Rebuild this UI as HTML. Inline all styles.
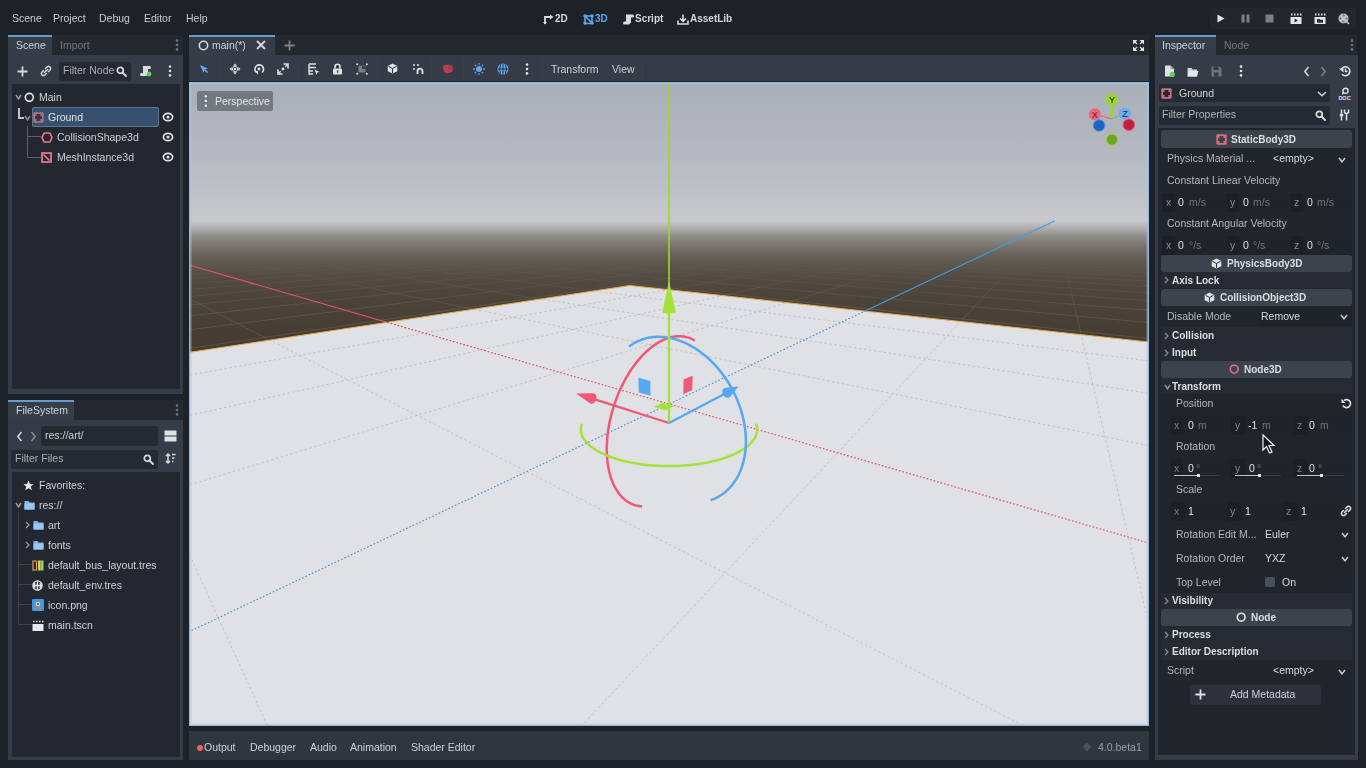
<!DOCTYPE html>
<html><head><meta charset="utf-8">
<style>
*{margin:0;padding:0;box-sizing:border-box}
html,body{width:1366px;height:768px;overflow:hidden;background:#1d2229;font-family:"Liberation Sans",sans-serif;color:#cfd1d4}
.a{position:absolute}
.t{position:absolute;white-space:nowrap;line-height:12px;will-change:transform}
svg{overflow:visible}
</style></head><body>

<div class="t" style="left:12.2px;top:12px;font-size:10.5px;color:#c9cbce;">Scene</div>
<div class="t" style="left:53.2px;top:12px;font-size:10.5px;color:#c9cbce;">Project</div>
<div class="t" style="left:99.1px;top:12px;font-size:10.5px;color:#c9cbce;">Debug</div>
<div class="t" style="left:144.0px;top:12px;font-size:10.5px;color:#c9cbce;">Editor</div>
<div class="t" style="left:186.1px;top:12px;font-size:10.5px;color:#c9cbce;">Help</div>
<svg class="a" style="left:542.5px;top:13.5px" width="11" height="11" viewBox="0 0 11 11"><g fill="none" stroke="#d9dbde" stroke-width="1.8"><path d="M2 10V3h6"/></g><path d="M7 0.5L10.5 3L7 5.5z" fill="#d9dbde"/><path d="M0 8L2 10.5L4 8z" fill="#d9dbde"/></svg>
<svg class="a" style="left:582.8px;top:13.5px" width="11" height="11" viewBox="0 0 11 11"><g fill="none" stroke="#5aa6ee" stroke-width="1.6"><path d="M2 2L9 9M2 3.5V9.5H8M3 2H9V8"/></g><g fill="#5aa6ee"><circle cx="2" cy="2" r="1.8"/><circle cx="9" cy="2" r="1.8"/><circle cx="2" cy="9" r="1.8"/><circle cx="9" cy="9" r="1.8"/></g></svg>
<svg class="a" style="left:622.5px;top:13.5px" width="11" height="11" viewBox="0 0 11 11"><path d="M3 0.5h6.5a1.5 1.5 0 0 1 0 3H8v5L6 10.5H1.5a1.5 1.5 0 0 1 0-3H3z" fill="#d9dbde"/></svg>
<svg class="a" style="left:677.0px;top:13.5px" width="12" height="11" viewBox="0 0 12 11"><g fill="none" stroke="#d9dbde" stroke-width="1.6"><path d="M6 0.5V7M3 4.5L6 7.3L9 4.5M1 6.5V10H11V6.5"/></g></svg>
<div class="t" style="left:555.4px;top:13px;font-size:10px;color:#d4d6d9;font-weight:bold;">2D</div>
<div class="t" style="left:595.3px;top:13px;font-size:10px;color:#5aa6ee;font-weight:bold;">3D</div>
<div class="t" style="left:635.1px;top:13px;font-size:10px;color:#d4d6d9;font-weight:bold;">Script</div>
<div class="t" style="left:690.2px;top:13px;font-size:10px;color:#d4d6d9;font-weight:bold;">AssetLib</div>
<div class="a" style="left:1210px;top:8px;width:146px;height:21px;background:#22272e;border-radius:3px;"></div>
<svg class="a" style="left:1216.5px;top:13.5px" width="8" height="9" viewBox="0 0 8 9"><path d="M0.5 0.5L7.5 4.5L0.5 8.5z" fill="#e4e6e8"/></svg>
<svg class="a" style="left:1240.5px;top:13.5px" width="9" height="9" viewBox="0 0 9 9"><rect x="0.5" y="0.5" width="3" height="8" fill="#7b7f86"/><rect x="5.5" y="0.5" width="3" height="8" fill="#7b7f86"/></svg>
<svg class="a" style="left:1264.5px;top:13.5px" width="9" height="9" viewBox="0 0 9 9"><rect x="0.5" y="0.5" width="8" height="8" rx="1" fill="#7b7f86"/></svg>
<svg class="a" style="left:1290.0px;top:12.5px" width="12" height="11" viewBox="0 0 12 11"><path d="M1 1.5h1.5M4 1.5h1.5M7 1.5h1.5M10 1.5h1.5" stroke="#e4e6e8" stroke-width="1.8"/><rect x="0.5" y="4" width="11" height="7" fill="#e4e6e8"/><path d="M4.5 5.5L8 7.5L4.5 9.5z" fill="#2a2f37"/></svg>
<svg class="a" style="left:1314.0px;top:12.5px" width="12" height="11" viewBox="0 0 12 11"><path d="M1 1.5h1.5M4 1.5h1.5M7 1.5h1.5M10 1.5h1.5" stroke="#e4e6e8" stroke-width="1.8"/><rect x="0.5" y="4" width="11" height="7" fill="#e4e6e8"/><path d="M3 6h2.5l0.7 0.8H9v3H3z" fill="#2a2f37"/></svg>
<svg class="a" style="left:1338.3px;top:12.5px" width="12" height="11" viewBox="0 0 12 11"><circle cx="5.5" cy="5.5" r="5" fill="#c3c6ca"/><g fill="#7b7f86"><circle cx="5.5" cy="2.5" r="1.2"/><circle cx="2.5" cy="5.5" r="1.2"/><circle cx="8.5" cy="5.5" r="1.2"/><circle cx="5.5" cy="8.5" r="1.2"/></g><path d="M8 8L11 11" stroke="#c3c6ca" stroke-width="1.5"/></svg>
<div class="a" style="left:8px;top:35px;width:175px;height:20px;background:#242930;"></div>
<div class="a" style="left:8px;top:35px;width:44px;height:20px;background:#363c48;"></div>
<div class="a" style="left:8px;top:35px;width:44px;height:2px;background:#6b9ad0;"></div>
<div class="a" style="left:8px;top:55px;width:175px;height:339px;background:#353b47;"></div>
<div class="t" style="left:15.6px;top:39px;font-size:10.5px;color:#cfd1d4;">Scene</div>
<div class="t" style="left:59.6px;top:39px;font-size:10.5px;color:#72767c;">Import</div>
<svg class="a" style="left:175.0px;top:39.0px" width="4" height="12" viewBox="0 0 4 12"><g fill="#6f747b"><circle cx="2" cy="1.6" r="1.3"/><circle cx="2" cy="6" r="1.3"/><circle cx="2" cy="10.4" r="1.3"/></g></svg>
<svg class="a" style="left:16.5px;top:65.5px" width="11" height="11" viewBox="0 0 11 11"><path d="M5.5 0.5V10.5M0.5 5.5H10.5" stroke="#d5d7da" stroke-width="1.8"/></svg>
<svg class="a" style="left:39.8px;top:65.0px" width="12" height="12" viewBox="0 0 12 12"><g fill="none" stroke="#d5d7da" stroke-width="1.5" stroke-linecap="round"><path d="M5.5 3.5l1.5-1.5a2.1 2.1 0 0 1 3 3L8.5 6.5"/><path d="M6.5 8.5L5 10a2.1 2.1 0 0 1-3-3L3.5 5.5"/><path d="M4.5 7.5l3-3"/></g></svg>
<div class="a" style="left:59px;top:62px;width:72px;height:19px;background:#252a32;border-radius:2px;"></div>
<div class="t" style="left:62.9px;top:64px;font-size:10.5px;color:#a9acb0;">Filter Node</div>
<svg class="a" style="left:115.5px;top:65.5px" width="11" height="11" viewBox="0 0 11 11"><g fill="none" stroke="#d5d7da" stroke-width="1.7"><circle cx="4.3" cy="4.3" r="3"/><path d="M6.5 6.5L10 10" stroke-linecap="round" stroke-width="2"/></g></svg>
<svg class="a" style="left:140.0px;top:65.0px" width="12" height="12" viewBox="0 0 12 12"><path d="M3 1h6.5a1.5 1.5 0 0 1 0 3H8v4.5L6.5 11H1.5a1.5 1.5 0 0 1 0-3H3z" fill="#d9dbde"/><circle cx="9" cy="9" r="2.4" fill="#5fd35f"/></svg>
<svg class="a" style="left:168.0px;top:65.0px" width="4" height="12" viewBox="0 0 4 12"><g fill="#d5d7da"><circle cx="2" cy="1.6" r="1.3"/><circle cx="2" cy="6" r="1.3"/><circle cx="2" cy="10.4" r="1.3"/></g></svg>
<div class="a" style="left:11.5px;top:84px;width:168.5px;height:305px;background:#232830;"></div>
<div class="a" style="left:32px;top:107px;width:127px;height:20px;background:#35516f;border:1px solid #60758c;border-radius:2px;"></div>
<svg class="a" style="left:15.0px;top:94.0px" width="7" height="6" viewBox="0 0 7 6"><path d="M1 1L3.5 4.8L6 1" fill="none" stroke="#9a9ea4" stroke-width="1.5"/></svg>
<svg class="a" style="left:23.5px;top:91.7px" width="10.7" height="10.7" viewBox="0 0 10.7 10.7"><circle cx="5.35" cy="5.35" r="4.0" fill="none" stroke="#e0e2e4" stroke-width="1.7"/></svg>
<svg class="a" style="left:17px;top:107px" width="8" height="13"><path d="M2 1v10h5" fill="none" stroke="#c2c5c9" stroke-width="2"/></svg>
<svg class="a" style="left:24.0px;top:115.0px" width="7" height="6" viewBox="0 0 7 6"><path d="M1 1L3.5 4.8L6 1" fill="none" stroke="#8a8e94" stroke-width="1.5"/></svg>
<svg class="a" style="left:32.5px;top:111.5px" width="11" height="11" viewBox="0 0 11 11"><rect x="0.3" y="0.3" width="10.4" height="10.4" rx="1.2" fill="#b36c7f"/><path d="M3.6 2H7.4V4H9V7H7.4V9H3.6V7H2V4H3.6z" fill="#2b3b4d"/></svg>
<svg class="a" style="left:26px;top:126px" width="20" height="34"><path d="M1.5 0V31.5H15M1.5 10.5H15" fill="none" stroke="#5d626a" stroke-width="1"/></svg>
<svg class="a" style="left:40.9px;top:131.5px" width="12" height="11" viewBox="0 0 12 11"><path d="M3.2 1h5.6L11 5.5L8.8 10H3.2L1 5.5z" fill="none" stroke="#f0788c" stroke-width="1.6"/></svg>
<svg class="a" style="left:41.4px;top:151.5px" width="11" height="11" viewBox="0 0 11 11"><rect x="1" y="1" width="9" height="9" fill="none" stroke="#f0788c" stroke-width="1.7"/><path d="M2.5 2.5L8.5 8.5" stroke="#f0788c" stroke-width="1.7"/></svg>
<div class="t" style="left:39.0px;top:91px;font-size:10.5px;color:#cfd1d4;">Main</div>
<div class="t" style="left:48.0px;top:111px;font-size:10.5px;color:#e2e4e6;">Ground</div>
<div class="t" style="left:56.6px;top:131px;font-size:10.5px;color:#cfd1d4;">CollisionShape3d</div>
<div class="t" style="left:56.6px;top:151px;font-size:10.5px;color:#cfd1d4;">MeshInstance3d</div>
<svg class="a" style="left:162.0px;top:112.0px" width="12" height="10" viewBox="0 0 12 10"><ellipse cx="6" cy="5" rx="4.6" ry="3.7" fill="none" stroke="#e3e5e7" stroke-width="1.7"/><circle cx="6" cy="5" r="1.5" fill="#e3e5e7"/></svg>
<svg class="a" style="left:162.0px;top:132.0px" width="12" height="10" viewBox="0 0 12 10"><ellipse cx="6" cy="5" rx="4.6" ry="3.7" fill="none" stroke="#e3e5e7" stroke-width="1.7"/><circle cx="6" cy="5" r="1.5" fill="#e3e5e7"/></svg>
<svg class="a" style="left:162.0px;top:152.0px" width="12" height="10" viewBox="0 0 12 10"><ellipse cx="6" cy="5" rx="4.6" ry="3.7" fill="none" stroke="#e3e5e7" stroke-width="1.7"/><circle cx="6" cy="5" r="1.5" fill="#e3e5e7"/></svg>
<div class="a" style="left:8px;top:400px;width:175px;height:20px;background:#242930;"></div>
<div class="a" style="left:8px;top:400px;width:66px;height:20px;background:#363c48;"></div>
<div class="a" style="left:8px;top:400px;width:66px;height:2px;background:#6b9ad0;"></div>
<div class="a" style="left:8px;top:420px;width:175px;height:340px;background:#353b47;"></div>
<div class="t" style="left:16.0px;top:404px;font-size:10.5px;color:#cfd1d4;">FileSystem</div>
<svg class="a" style="left:175.0px;top:404.0px" width="4" height="12" viewBox="0 0 4 12"><g fill="#6f747b"><circle cx="2" cy="1.6" r="1.3"/><circle cx="2" cy="6" r="1.3"/><circle cx="2" cy="10.4" r="1.3"/></g></svg>
<svg class="a" style="left:16.0px;top:430.5px" width="7" height="11" viewBox="0 0 7 11"><path d="M5.5 1L1.8 5.5L5.5 10" fill="none" stroke="#d5d7da" stroke-width="1.5"/></svg>
<svg class="a" style="left:30.0px;top:430.5px" width="7" height="11" viewBox="0 0 7 11"><path d="M1.5 1L5.2 5.5L1.5 10" fill="none" stroke="#8a8e94" stroke-width="1.5"/></svg>
<div class="a" style="left:41.4px;top:426px;width:117px;height:20px;background:#252a32;border-radius:2px;"></div>
<div class="t" style="left:44.9px;top:429px;font-size:10.5px;color:#cfd1d4;">res://art/</div>
<svg class="a" style="left:163.5px;top:430.0px" width="13" height="12" viewBox="0 0 13 12"><rect x="0.5" y="0.5" width="12" height="5" fill="#e0e2e4"/><rect x="0.5" y="6.5" width="12" height="5" fill="#e0e2e4"/></svg>
<div class="a" style="left:11.3px;top:450px;width:147px;height:19px;background:#252a32;border-radius:2px;"></div>
<div class="t" style="left:15.2px;top:452px;font-size:10.5px;color:#a9acb0;">Filter Files</div>
<svg class="a" style="left:142.5px;top:453.5px" width="11" height="11" viewBox="0 0 11 11"><g fill="none" stroke="#d5d7da" stroke-width="1.7"><circle cx="4.3" cy="4.3" r="3"/><path d="M6.5 6.5L10 10" stroke-linecap="round" stroke-width="2"/></g></svg>
<svg class="a" style="left:165.0px;top:453.0px" width="11" height="11" viewBox="0 0 11 11"><g fill="none" stroke="#d9dbde" stroke-width="1.5"><path d="M3 1v9M1 3l2-2l2 2M1 8l2 2l2-2"/><path d="M7 1.5h3.5M7 5h2.5M7 8.5h1.5"/></g></svg>
<div class="a" style="left:11.5px;top:471.5px;width:168.5px;height:285.5px;background:#232830;"></div>
<svg class="a" style="left:23.4px;top:479.8px" width="11" height="11" viewBox="0 0 11 11"><path d="M5.5 0.5L7 4L10.5 4.2L7.8 6.6L8.8 10.3L5.5 8.3L2.2 10.3L3.2 6.6L0.5 4.2L4 4z" fill="#e6e8ea"/></svg>
<svg class="a" style="left:15.0px;top:502.0px" width="7" height="6" viewBox="0 0 7 6"><path d="M1 1L3.5 4.8L6 1" fill="none" stroke="#9a9ea4" stroke-width="1.5"/></svg>
<svg class="a" style="left:23.5px;top:500.0px" width="11" height="10" viewBox="0 0 11 10"><path d="M0.5 1h4l1 1.5h5v7h-10z" fill="#7fb1e6"/><path d="M0.5 3.5h10v6h-10z" fill="#9cc6f0"/></svg>
<svg class="a" style="left:18px;top:512px" width="16" height="115"><path d="M0.5 0V112.5M0.5 52.5H14M0.5 72.5H14M0.5 92.5H14M0.5 112.5H14" fill="none" stroke="#3e434b" stroke-width="1"/></svg>
<svg class="a" style="left:24.5px;top:521.0px" width="5" height="8" viewBox="0 0 5 8"><path d="M1 1L4 4L1 7" fill="none" stroke="#9a9ea4" stroke-width="1.2"/></svg>
<svg class="a" style="left:32.5px;top:520.0px" width="11" height="10" viewBox="0 0 11 10"><path d="M0.5 1h4l1 1.5h5v7h-10z" fill="#7fb1e6"/><path d="M0.5 3.5h10v6h-10z" fill="#9cc6f0"/></svg>
<svg class="a" style="left:24.5px;top:541.0px" width="5" height="8" viewBox="0 0 5 8"><path d="M1 1L4 4L1 7" fill="none" stroke="#9a9ea4" stroke-width="1.2"/></svg>
<svg class="a" style="left:32.5px;top:540.0px" width="11" height="10" viewBox="0 0 11 10"><path d="M0.5 1h4l1 1.5h5v7h-10z" fill="#7fb1e6"/><path d="M0.5 3.5h10v6h-10z" fill="#9cc6f0"/></svg>
<svg class="a" style="left:32.0px;top:559.5px" width="12" height="11" viewBox="0 0 12 11"><rect x="1" y="1" width="3.5" height="9" fill="none" stroke="#d7a24a" stroke-width="1.2"/><rect x="6" y="0.5" width="2.5" height="10" fill="#f2c94c"/><rect x="8.5" y="0.5" width="3" height="10" fill="#8ed46a"/></svg>
<svg class="a" style="left:32.3px;top:579.5px" width="11" height="11" viewBox="0 0 11 11"><g fill="none" stroke="#e6e8ea" stroke-width="1.3"><circle cx="5.5" cy="5.5" r="4.6"/><path d="M1 5.5h9M5.5 1v9M3 2.5q-1.5 3 0 6M8 2.5q1.5 3 0 6"/></g></svg>
<svg class="a" style="left:32.0px;top:599.0px" width="12" height="12" viewBox="0 0 12 12"><rect x="0" y="0" width="12" height="12" rx="1" fill="#3f98e6"/><circle cx="6" cy="5" r="2.3" fill="#f4d7a0"/><path d="M4.5 7L3.5 11M7.5 7L8.5 11" stroke="#e07a3a" stroke-width="1.2"/><circle cx="6" cy="5" r="1" fill="#333"/></svg>
<svg class="a" style="left:32.0px;top:619.5px" width="12" height="11" viewBox="0 0 12 11"><rect x="0.5" y="4" width="11" height="7" fill="#e6e8ea"/><path d="M1 1.5h1.5M4 1.5h1.5M7 1.5h1.5M10 1.5h1.5" stroke="#e6e8ea" stroke-width="1.6"/></svg>
<div class="t" style="left:39.0px;top:479px;font-size:10.5px;color:#cfd1d4;">Favorites:</div>
<div class="t" style="left:39.0px;top:499px;font-size:10.5px;color:#cfd1d4;">res://</div>
<div class="t" style="left:47.7px;top:519px;font-size:10.5px;color:#cfd1d4;">art</div>
<div class="t" style="left:47.7px;top:539px;font-size:10.5px;color:#cfd1d4;">fonts</div>
<div class="t" style="left:47.7px;top:559px;font-size:10.5px;color:#cfd1d4;">default_bus_layout.tres</div>
<div class="t" style="left:47.7px;top:579px;font-size:10.5px;color:#cfd1d4;">default_env.tres</div>
<div class="t" style="left:47.7px;top:599px;font-size:10.5px;color:#cfd1d4;">icon.png</div>
<div class="t" style="left:47.7px;top:619px;font-size:10.5px;color:#cfd1d4;">main.tscn</div>
<div class="a" style="left:189px;top:35px;width:960px;height:20px;background:#242930;"></div>
<div class="a" style="left:189px;top:35px;width:86px;height:20px;background:#363c48;"></div>
<div class="a" style="left:189px;top:35px;width:86px;height:2px;background:#6b9ad0;"></div>
<svg class="a" style="left:197.5px;top:39.7px" width="11.0" height="11.0" viewBox="0 0 11.0 11.0"><circle cx="5.5" cy="5.5" r="4.2" fill="none" stroke="#d5d7da" stroke-width="1.6"/></svg>
<div class="t" style="left:211.9px;top:39px;font-size:10.5px;color:#cfd1d4;">main(*)</div>
<svg class="a" style="left:256.0px;top:40.0px" width="10" height="10" viewBox="0 0 10 10"><path d="M1 1L9 9M9 1L1 9" stroke="#d5d7da" stroke-width="1.8"/></svg>
<svg class="a" style="left:283.5px;top:39.7px" width="11" height="11" viewBox="0 0 11 11"><path d="M5.5 0.5V10.5M0.5 5.5H10.5" stroke="#7d8288" stroke-width="1.8"/></svg>
<div class="a" style="left:189px;top:55px;width:960px;height:26px;background:#353b47;"></div>
<div class="a" style="left:189px;top:81px;width:960px;height:1px;background:#1e2630;"></div>
<div class="a" style="left:219px;top:59px;width:1px;height:20px;background:#3b414c;"></div>
<div class="a" style="left:298px;top:59px;width:1px;height:20px;background:#3b414c;"></div>
<div class="a" style="left:377px;top:59px;width:1px;height:20px;background:#3b414c;"></div>
<div class="a" style="left:431px;top:59px;width:1px;height:20px;background:#3b414c;"></div>
<div class="a" style="left:463px;top:59px;width:1px;height:20px;background:#3b414c;"></div>
<div class="a" style="left:542px;top:59px;width:1px;height:20px;background:#3b414c;"></div>
<div class="a" style="left:642px;top:59px;width:1px;height:20px;background:#3b414c;"></div>
<svg class="a" style="left:198.9px;top:63.6px" width="10" height="10" viewBox="0 0 10 10"><path d="M1 1L9 4.5L5.5 5.5L4.5 9z" fill="#62a8f2"/><path d="M5 5L8.5 8.5" stroke="#62a8f2" stroke-width="1.6"/></svg>
<svg class="a" style="left:228.9px;top:62.9px" width="12" height="12" viewBox="0 0 12 12"><g fill="#e0e2e4"><path d="M6 0.5L8 2.7H4z"/><path d="M6 11.5L8 9.3H4z"/><path d="M0.5 6L2.7 4V8z"/><path d="M11.5 6L9.3 4V8z"/><circle cx="6" cy="6" r="1.3"/></g><circle cx="6" cy="6" r="2.7" fill="none" stroke="#e0e2e4" stroke-width="0.9"/></svg>
<svg class="a" style="left:252.9px;top:62.9px" width="12" height="12" viewBox="0 0 12 12"><path d="M3.2 9.2A4.3 4.3 0 1 1 9 9.5" fill="none" stroke="#e0e2e4" stroke-width="1.6"/><path d="M1.5 8h3.5v3.5z" fill="#e0e2e4"/><circle cx="6" cy="6" r="1.4" fill="#e0e2e4"/></svg>
<svg class="a" style="left:276.8px;top:62.9px" width="12" height="12" viewBox="0 0 12 12"><g fill="none" stroke="#e0e2e4" stroke-width="1.6"><path d="M6.5 1H11V5.5"/><path d="M1 6.5V11H5.5"/></g><circle cx="6" cy="6" r="1.4" fill="#e0e2e4"/><path d="M10.5 1.5L8.3 3.7M1.5 10.5L3.7 8.3" stroke="#e0e2e4" stroke-width="1.4"/></svg>
<svg class="a" style="left:308.0px;top:62.9px" width="12" height="12" viewBox="0 0 12 12"><g fill="none" stroke="#e0e2e4" stroke-width="1.4"><path d="M1 1h7M1 4.5h7M1 8h4M1 1v10h4"/></g><path d="M6.5 6.5L11.5 9L9.3 9.6L8.5 11.8z" fill="#e0e2e4"/></svg>
<svg class="a" style="left:332.3px;top:62.9px" width="11" height="12" viewBox="0 0 11 12"><path d="M3 5.5V3.8a2.5 2.5 0 0 1 5 0V5.5" fill="none" stroke="#e0e2e4" stroke-width="1.6"/><rect x="1" y="5.5" width="9" height="6" rx="1" fill="#e0e2e4"/><rect x="5" y="7.3" width="1.2" height="2.5" fill="#2c323c"/></svg>
<svg class="a" style="left:356.0px;top:62.9px" width="12" height="12" viewBox="0 0 12 12"><rect x="2.5" y="2.5" width="7" height="7" fill="#7a7f86"/><rect x="6" y="2.5" width="3.5" height="3.5" fill="#3a3f47"/><g fill="#e0e2e4"><circle cx="1.2" cy="1.2" r="1"/><circle cx="10.8" cy="1.2" r="1"/><circle cx="1.2" cy="10.8" r="1"/><circle cx="10.8" cy="10.8" r="1"/></g></svg>
<svg class="a" style="left:387.4px;top:63.4px" width="11" height="11" viewBox="0 0 11 11"><path d="M5.5 0.5L10.3 3V8.2L5.5 10.5L0.7 8.2V3z" fill="#e0e2e4"/><path d="M5.5 5.5L1.5 3.3M5.5 5.5L9.5 3.3M5.5 5.5V10" stroke="#2a2f38" stroke-width="1"/></svg>
<svg class="a" style="left:411.5px;top:62.9px" width="12" height="12" viewBox="0 0 12 12"><g fill="#e0e2e4"><circle cx="2" cy="2" r="1"/><circle cx="2" cy="6" r="1"/><circle cx="6" cy="2" r="1"/></g><path d="M5.5 11V8.2a2.5 2.5 0 0 1 5 0V11" fill="none" stroke="#e0e2e4" stroke-width="1.8"/></svg>
<svg class="a" style="left:441.6px;top:63.4px" width="12" height="11" viewBox="0 0 12 11"><path d="M1 2.5L6.5 1.5L11 3L10 9L4.5 10.5L1.5 8z" fill="#b8404f"/><path d="M6.5 1.5L7 6L11 3" fill="none" stroke="#8a2f3c" stroke-width="0.8"/></svg>
<svg class="a" style="left:472.8px;top:62.9px" width="12" height="12" viewBox="0 0 12 12"><circle cx="6" cy="6" r="3" fill="#5fa9f2"/><g stroke="#5fa9f2" stroke-width="1.3"><path d="M6 0v1.8M6 10.2V12M0 6h1.8M10.2 6H12M1.8 1.8l1.3 1.3M8.9 8.9l1.3 1.3M1.8 10.2l1.3-1.3M8.9 3.1l1.3-1.3"/></g></svg>
<svg class="a" style="left:497.0px;top:62.9px" width="12" height="12" viewBox="0 0 12 12"><circle cx="6" cy="6" r="5.5" fill="#5fa9f2"/><g fill="none" stroke="#2c323c" stroke-width="1"><path d="M0.8 6h10.4M6 0.8v10.4M3.6 1.5q-2 4.5 0 9M8.4 1.5q2 4.5 0 9"/></g></svg>
<svg class="a" style="left:525.0px;top:62.9px" width="4" height="12" viewBox="0 0 4 12"><g fill="#e0e2e4"><circle cx="2" cy="1.6" r="1.3"/><circle cx="2" cy="6" r="1.3"/><circle cx="2" cy="10.4" r="1.3"/></g></svg>
<div class="t" style="left:551.4px;top:63px;font-size:10.5px;color:#cfd1d4;">Transform</div>
<div class="t" style="left:611.8px;top:63px;font-size:10.5px;color:#cfd1d4;">View</div>
<svg class="a" style="left:1132.5px;top:39.5px" width="11" height="11" viewBox="0 0 11 11"><g fill="#e0e2e4"><path d="M0 0h4.5L0 4.5zM11 0v4.5L6.5 0zM0 11v-4.5L4.5 11zM11 11h-4.5L11 6.5z"/></g><path d="M1.5 1.5l2.5 2.5M9.5 1.5l-2.5 2.5M1.5 9.5l2.5-2.5M9.5 9.5l-2.5-2.5" stroke="#e0e2e4" stroke-width="1.3"/></svg>
<div class="a" style="left:189px;top:82px;width:960px;height:644px;background:#94b8dc;"></div>
<svg class="a" style="left:190px;top:83px;overflow:hidden" width="958" height="642" viewBox="190 83 958 642"><defs><linearGradient id="bg" gradientUnits="userSpaceOnUse" x1="0" y1="83" x2="0" y2="725">
<stop offset="0.0000" stop-color="#a9afb8"/>
<stop offset="0.0732" stop-color="#b1b5bd"/>
<stop offset="0.1511" stop-color="#babfc6"/>
<stop offset="0.1978" stop-color="#c5c7ca"/>
<stop offset="0.2150" stop-color="#c8c9cc"/>
<stop offset="0.2243" stop-color="#b2b2b2"/>
<stop offset="0.2368" stop-color="#94918d"/>
<stop offset="0.2523" stop-color="#7b7670"/>
<stop offset="0.2679" stop-color="#68625a"/>
<stop offset="0.2835" stop-color="#5c554c"/>
<stop offset="0.2991" stop-color="#544c43"/>
<stop offset="0.3224" stop-color="#4e453b"/>
<stop offset="0.3536" stop-color="#4a4137"/>
<stop offset="0.4003" stop-color="#463c31"/>
<stop offset="0.4938" stop-color="#42382d"/>
<stop offset="1.0000" stop-color="#3b3128"/>
</linearGradient><clipPath id="pl"><polygon points="629.8,285.5 -501.7,457.3 -18328.7,8273.0 20153.6,8273.0 1408.8,370.3"/></clipPath><clipPath id="npl"><path d="M190 83H1148V725H190z M629.8,285.5 -501.7,457.3 -18328.7,8273.0 20153.6,8273.0 1408.8,370.3z" clip-rule="evenodd"/></clipPath><linearGradient id="gm" gradientUnits="userSpaceOnUse" x1="0" y1="258" x2="0" y2="310"><stop offset="0" stop-color="#fff" stop-opacity="0"/><stop offset="1" stop-color="#fff" stop-opacity="1"/></linearGradient><mask id="gmask" maskUnits="userSpaceOnUse" x="190" y="83" width="958" height="642"><rect x="190" y="83" width="958" height="642" fill="url(#gm)"/></mask></defs><rect x="190" y="83" width="958" height="642" fill="url(#bg)"/><g clip-path="url(#npl)"><g mask="url(#gmask)"><path d="M1153.0 237.2L1141.4 235.3M1153.0 241.0L1123.6 235.0M1153.0 247.3L1106.3 234.8M1153.0 259.2L1089.6 234.6M1153.0 291.1L1073.4 234.4M1153.0 642.3L1057.7 234.2M269.4 730.0L185.0 544.9M577.8 730.0L1042.5 234.0M1031.9 730.0L185.0 296.6M185.0 486.3L1013.3 233.6M1153.0 446.4L185.0 250.8M185.0 416.5L999.4 233.4M1153.0 394.0L185.0 243.9M185.0 375.8L985.8 233.3M1153.0 361.4L185.0 239.6M185.0 349.1L972.6 233.1M1153.0 339.1L185.0 236.6M185.0 330.3L959.8 232.9M1153.0 323.0L194.4 235.4M185.0 316.3L947.3 232.8M1153.0 310.7L212.2 235.1M185.0 305.4L935.2 232.6M1153.0 301.0L229.3 234.8M185.0 296.8L923.4 232.4M1153.0 293.3L245.7 234.5M185.0 289.8L911.8 232.3M1153.0 286.9L261.5 234.2M185.0 284.0L900.6 232.2M1153.0 281.5L276.6 234.0M185.0 279.0L889.7 232.0M1153.0 277.0L291.2 233.7M185.0 274.8L879.0 231.9M1153.0 273.1L305.3 233.5M185.0 271.2L868.6 231.7M1153.0 269.7L318.8 233.3M185.0 268.0L858.5 231.6M1153.0 266.7L331.9 233.1M185.0 265.2L848.6 231.5M1153.0 264.0L344.5 232.9M185.0 262.7L838.9 231.4M1153.0 261.7L356.7 232.7M185.0 260.5L829.5 231.2M1153.0 259.6L368.5 232.5M185.0 258.5L820.3 231.1M1153.0 257.7L379.9 232.3M185.0 256.7L811.3 231.0M1153.0 256.0L390.9 232.1M185.0 255.1L802.5 230.9M1153.0 254.4L401.5 231.9M185.0 253.6L793.9 230.8M1153.0 253.0L411.8 231.7M185.0 252.2L785.5 230.7M1153.0 251.6L421.8 231.6M185.0 251.0L777.2 230.6M1153.0 250.4L431.5 231.4M185.0 249.8L769.2 230.5M1153.0 249.3L440.9 231.2M185.0 248.7L761.3 230.4M1153.0 248.3L450.1 231.1M185.0 247.7L753.6 230.3M1153.0 247.3L458.9 230.9M185.0 246.8L746.1 230.2M1153.0 246.4L467.5 230.8M185.0 245.9L738.7 230.1M1153.0 245.6L475.9 230.7M185.0 245.1L731.4 230.0M1153.0 244.8L484.0 230.5M185.0 244.4L724.3 229.9M1153.0 244.1L491.9 230.4M185.0 243.7L717.4 229.8M1153.0 243.4L499.5 230.3M185.0 243.0L710.6 229.7M1153.0 242.7L507.0 230.1M185.0 242.4L703.9 229.6M1153.0 242.1L514.3 230.0M185.0 241.8L697.4 229.5M1153.0 241.5L521.4 229.9M185.0 241.2L691.0 229.4M1153.0 241.0L528.3 229.8M185.0 240.7L684.7 229.4M1153.0 240.4L535.0 229.7M185.0 240.2L678.5 229.3M1153.0 240.0L541.5 229.6M185.0 239.7L672.5 229.2M1153.0 239.5L547.9 229.5M185.0 239.2L666.5 229.1M1153.0 239.0L554.2 229.4M185.0 238.8L660.7 229.1M1153.0 238.6L560.3 229.3" stroke="#8e8e90" stroke-opacity="0.33" stroke-width="0.8" fill="none"/></g></g><polygon points="629.8,285.5 -501.7,457.3 -18328.7,8273.0 20153.6,8273.0 1408.8,370.3" fill="#dfe1e4" stroke="#e8a848" stroke-width="1"/><g clip-path="url(#pl)"><path d="M1153.0 237.2L1141.4 235.3M1153.0 241.0L1123.6 235.0M1153.0 247.3L1106.3 234.8M1153.0 259.2L1089.6 234.6M1153.0 291.1L1073.4 234.4M1153.0 642.3L1057.7 234.2M269.4 730.0L185.0 544.9M577.8 730.0L1042.5 234.0M1031.9 730.0L185.0 296.6M185.0 486.3L1013.3 233.6M1153.0 446.4L185.0 250.8M185.0 416.5L999.4 233.4M1153.0 394.0L185.0 243.9M185.0 375.8L985.8 233.3M1153.0 361.4L185.0 239.6M185.0 349.1L972.6 233.1M1153.0 339.1L185.0 236.6M185.0 330.3L959.8 232.9M1153.0 323.0L194.4 235.4M185.0 316.3L947.3 232.8M1153.0 310.7L212.2 235.1M185.0 305.4L935.2 232.6M1153.0 301.0L229.3 234.8M185.0 296.8L923.4 232.4M1153.0 293.3L245.7 234.5M185.0 289.8L911.8 232.3M1153.0 286.9L261.5 234.2M185.0 284.0L900.6 232.2M1153.0 281.5L276.6 234.0M185.0 279.0L889.7 232.0M1153.0 277.0L291.2 233.7M185.0 274.8L879.0 231.9M1153.0 273.1L305.3 233.5M185.0 271.2L868.6 231.7M1153.0 269.7L318.8 233.3M185.0 268.0L858.5 231.6M1153.0 266.7L331.9 233.1M185.0 265.2L848.6 231.5M1153.0 264.0L344.5 232.9M185.0 262.7L838.9 231.4M1153.0 261.7L356.7 232.7M185.0 260.5L829.5 231.2M1153.0 259.6L368.5 232.5M185.0 258.5L820.3 231.1M1153.0 257.7L379.9 232.3M185.0 256.7L811.3 231.0M1153.0 256.0L390.9 232.1M185.0 255.1L802.5 230.9M1153.0 254.4L401.5 231.9M185.0 253.6L793.9 230.8M1153.0 253.0L411.8 231.7M185.0 252.2L785.5 230.7M1153.0 251.6L421.8 231.6M185.0 251.0L777.2 230.6M1153.0 250.4L431.5 231.4M185.0 249.8L769.2 230.5M1153.0 249.3L440.9 231.2M185.0 248.7L761.3 230.4M1153.0 248.3L450.1 231.1M185.0 247.7L753.6 230.3M1153.0 247.3L458.9 230.9M185.0 246.8L746.1 230.2M1153.0 246.4L467.5 230.8M185.0 245.9L738.7 230.1M1153.0 245.6L475.9 230.7M185.0 245.1L731.4 230.0M1153.0 244.8L484.0 230.5M185.0 244.4L724.3 229.9M1153.0 244.1L491.9 230.4M185.0 243.7L717.4 229.8M1153.0 243.4L499.5 230.3M185.0 243.0L710.6 229.7M1153.0 242.7L507.0 230.1M185.0 242.4L703.9 229.6M1153.0 242.1L514.3 230.0M185.0 241.8L697.4 229.5M1153.0 241.5L521.4 229.9M185.0 241.2L691.0 229.4M1153.0 241.0L528.3 229.8M185.0 240.7L684.7 229.4M1153.0 240.4L535.0 229.7M185.0 240.2L678.5 229.3M1153.0 240.0L541.5 229.6M185.0 239.7L672.5 229.2M1153.0 239.5L547.9 229.5M185.0 239.2L666.5 229.1M1153.0 239.0L554.2 229.4M185.0 238.8L660.7 229.1M1153.0 238.6L560.3 229.3" stroke="#b1b4b8" stroke-opacity="0.75" stroke-width="0.9" stroke-dasharray="2.5 2.5" fill="none"/></g><path d="M1153.0 544.2L185.0 263.8" stroke="#f0506c" stroke-width="1.1" clip-path="url(#npl)"/><path d="M1153.0 544.2L185.0 263.8" stroke="#e83a5a" stroke-width="1.1" stroke-dasharray="1.6 2" clip-path="url(#pl)"/><path d="M185.0 633.7L1054.5 221.1" stroke="#3d9fe3" stroke-width="1.1" clip-path="url(#npl)"/><path d="M185.0 633.7L1054.5 221.1" stroke="#3a8fd8" stroke-width="1.1" stroke-dasharray="1.6 2" clip-path="url(#pl)"/><path d="M669 83L669 404.0" stroke="#98da24" stroke-width="1.6"/><path d="M694.8 340.6 L694.0 340.2 L693.2 339.7 L692.5 339.3 L691.7 338.9 L690.9 338.6 L690.1 338.2 L689.3 337.9 L688.5 337.6 L687.6 337.4 L686.8 337.2 L685.9 336.9 L685.0 336.8 L684.2 336.6 L683.3 336.5 L682.4 336.4 L681.5 336.3 L680.6 336.2 L679.6 336.2 L678.7 336.2 L677.8 336.2 L676.8 336.3 L675.9 336.4 L674.9 336.5 L673.9 336.6 L673.0 336.8 L672.0 337.0 L671.0 337.2 L670.0 337.5 L669.0 337.8 L668.0 338.1 L667.0 338.5 L666.0 338.8 L665.0 339.2 L663.9 339.7 L662.9 340.1 L661.9 340.6 L660.8 341.2 L659.8 341.7 L658.8 342.3 L657.7 342.9 L656.7 343.6 L655.7 344.3 L654.6 345.0 L653.6 345.7 L652.5 346.5 L651.5 347.3 L650.5 348.1 L649.4 348.9 L648.4 349.8 L647.4 350.7 L646.3 351.7 L645.3 352.7 L644.3 353.7 L643.3 354.7 L642.3 355.7 L641.3 356.8 L640.3 357.9 L639.3 359.1 L638.3 360.2 L637.3 361.4 L636.3 362.6 L635.4 363.9 L634.4 365.1 L633.5 366.4 L632.6 367.7 L631.6 369.1 L630.7 370.4 L629.8 371.8 L628.9 373.2 L628.1 374.6 L627.2 376.1 L626.3 377.5 L625.5 379.0 L624.7 380.5 L623.9 382.0 L623.1 383.6 L622.3 385.1 L621.5 386.7 L620.8 388.3 L620.0 389.9 L619.3 391.5 L618.6 393.1 L617.9 394.8 L617.3 396.4 L616.6 398.1 L616.0 399.7 L615.4 401.4 L614.8 403.1 L614.2 404.8 L613.7 406.5 L613.2 408.2 L612.6 410.0 L612.2 411.7 L611.7 413.4 L611.2 415.1 L610.8 416.9 L610.4 418.6 L610.0 420.3 L609.6 422.1 L609.3 423.8 L609.0 425.5 L608.7 427.3 L608.4 429.0 L608.1 430.7 L607.9 432.4 L607.7 434.2 L607.5 435.9 L607.3 437.6 L607.2 439.2 L607.1 440.9 L607.0 442.6 L606.9 444.3 L606.8 445.9 L606.8 447.5 L606.8 449.2 L606.8 450.8 L606.8 452.4 L606.9 454.0 L607.0 455.5 L607.1 457.1 L607.2 458.6 L607.3 460.1 L607.5 461.6 L607.7 463.1 L607.9 464.6 L608.1 466.0 L608.4 467.4 L608.6 468.8 L608.9 470.2 L609.2 471.6 L609.6 472.9 L609.9 474.2 L610.3 475.5 L610.6 476.8 L611.0 478.0 L611.5 479.3 L611.9 480.5 L612.4 481.6 L612.8 482.8 L613.3 483.9 L613.8 485.0 L614.3 486.1 L614.9 487.1 L615.4 488.1 L616.0 489.1 L616.6 490.1 L617.2 491.0 L617.8 491.9 L618.4 492.8 L619.1 493.7 L619.7 494.5 L620.4 495.3 L621.1 496.1 L621.8 496.8 L622.5 497.5 L623.2 498.2 L623.9 498.9 L624.7 499.5 L625.4 500.1 L626.2 500.7 L626.9 501.2 L627.7 501.8 L628.5 502.3 L629.3 502.7 L630.1 503.2 L630.9 503.6 L631.7 503.9 L632.6 504.3 L633.4 504.6 L634.2 504.9 L635.1 505.2 L635.9 505.4 L636.8 505.6 L637.7 505.8 L638.5 506.0 L639.4 506.1 L640.3 506.2 L641.2 506.3 L642.1 506.4" stroke="#ef5877" stroke-width="2.5" fill="none"/><path d="M756.0 423.7 L756.3 424.3 L756.5 424.9 L756.6 425.5 L756.8 426.2 L756.9 426.8 L757.0 427.5 L757.1 428.1 L757.1 428.7 L757.2 429.4 L757.1 430.0 L757.1 430.7 L757.0 431.3 L756.9 432.0 L756.8 432.7 L756.7 433.3 L756.5 434.0 L756.3 434.6 L756.0 435.3 L755.8 436.0 L755.5 436.6 L755.1 437.3 L754.8 437.9 L754.4 438.6 L754.0 439.2 L753.5 439.9 L753.0 440.6 L752.5 441.2 L752.0 441.9 L751.4 442.5 L750.8 443.1 L750.2 443.8 L749.5 444.4 L748.8 445.1 L748.1 445.7 L747.3 446.3 L746.5 446.9 L745.7 447.6 L744.8 448.2 L743.9 448.8 L743.0 449.4 L742.1 450.0 L741.1 450.6 L740.1 451.1 L739.1 451.7 L738.0 452.3 L736.9 452.8 L735.8 453.4 L734.6 453.9 L733.5 454.5 L732.3 455.0 L731.0 455.5 L729.8 456.0 L728.5 456.5 L727.1 457.0 L725.8 457.5 L724.4 458.0 L723.0 458.4 L721.6 458.9 L720.2 459.3 L718.7 459.7 L717.2 460.2 L715.7 460.6 L714.2 460.9 L712.6 461.3 L711.1 461.7 L709.5 462.0 L707.8 462.4 L706.2 462.7 L704.6 463.0 L702.9 463.3 L701.2 463.6 L699.5 463.9 L697.8 464.1 L696.1 464.4 L694.3 464.6 L692.6 464.8 L690.8 465.0 L689.0 465.2 L687.2 465.3 L685.4 465.5 L683.6 465.6 L681.8 465.7 L680.0 465.8 L678.2 465.9 L676.3 466.0 L674.5 466.1 L672.7 466.1 L670.8 466.1 L669.0 466.1 L667.2 466.1 L665.3 466.1 L663.5 466.1 L661.7 466.0 L659.8 465.9 L658.0 465.8 L656.2 465.7 L654.4 465.6 L652.6 465.5 L650.8 465.3 L649.0 465.2 L647.2 465.0 L645.4 464.8 L643.7 464.6 L641.9 464.4 L640.2 464.1 L638.5 463.9 L636.8 463.6 L635.1 463.3 L633.4 463.0 L631.8 462.7 L630.2 462.4 L628.5 462.0 L626.9 461.7 L625.4 461.3 L623.8 460.9 L622.3 460.6 L620.8 460.2 L619.3 459.7 L617.8 459.3 L616.4 458.9 L615.0 458.4 L613.6 458.0 L612.2 457.5 L610.9 457.0 L609.5 456.5 L608.2 456.0 L607.0 455.5 L605.7 455.0 L604.5 454.5 L603.4 453.9 L602.2 453.4 L601.1 452.8 L600.0 452.3 L598.9 451.7 L597.9 451.1 L596.9 450.6 L595.9 450.0 L595.0 449.4 L594.1 448.8 L593.2 448.2 L592.3 447.6 L591.5 446.9 L590.7 446.3 L589.9 445.7 L589.2 445.1 L588.5 444.4 L587.8 443.8 L587.2 443.1 L586.6 442.5 L586.0 441.9 L585.5 441.2 L585.0 440.6 L584.5 439.9 L584.0 439.2 L583.6 438.6 L583.2 437.9 L582.9 437.3 L582.5 436.6 L582.2 436.0 L582.0 435.3 L581.7 434.6 L581.5 434.0 L581.3 433.3 L581.2 432.7 L581.1 432.0 L581.0 431.3 L580.9 430.7 L580.9 430.0 L580.8 429.4 L580.9 428.7 L580.9 428.1 L581.0 427.5 L581.1 426.8 L581.2 426.2 L581.4 425.5 L581.5 424.9 L581.7 424.3 L582.0 423.7" stroke="#a4e23a" stroke-width="2.5" fill="none"/><path d="M629.1 346.6 L630.0 345.9 L630.8 345.3 L631.8 344.7 L632.7 344.1 L633.6 343.5 L634.6 342.9 L635.5 342.4 L636.5 341.9 L637.5 341.4 L638.5 340.9 L639.6 340.5 L640.6 340.1 L641.7 339.7 L642.7 339.3 L643.8 339.0 L644.9 338.6 L646.0 338.3 L647.1 338.1 L648.3 337.8 L649.4 337.6 L650.6 337.4 L651.7 337.2 L652.9 337.1 L654.1 337.0 L655.3 336.9 L656.5 336.8 L657.7 336.8 L658.9 336.8 L660.2 336.8 L661.4 336.9 L662.7 337.0 L663.9 337.1 L665.2 337.2 L666.4 337.4 L667.7 337.6 L669.0 337.8 L670.3 338.0 L671.6 338.3 L672.9 338.6 L674.2 339.0 L675.5 339.3 L676.8 339.7 L678.1 340.2 L679.4 340.6 L680.7 341.1 L682.0 341.6 L683.3 342.2 L684.6 342.7 L686.0 343.3 L687.3 344.0 L688.6 344.6 L689.9 345.3 L691.2 346.0 L692.5 346.8 L693.8 347.5 L695.1 348.3 L696.4 349.2 L697.6 350.0 L698.9 350.9 L700.2 351.8 L701.4 352.8 L702.7 353.7 L703.9 354.7 L705.2 355.7 L706.4 356.8 L707.6 357.8 L708.8 358.9 L710.0 360.0 L711.2 361.2 L712.4 362.3 L713.6 363.5 L714.7 364.7 L715.8 366.0 L716.9 367.2 L718.1 368.5 L719.1 369.8 L720.2 371.1 L721.3 372.5 L722.3 373.8 L723.3 375.2 L724.3 376.6 L725.3 378.0 L726.3 379.4 L727.2 380.9 L728.2 382.3 L729.1 383.8 L730.0 385.3 L730.8 386.8 L731.7 388.3 L732.5 389.9 L733.3 391.4 L734.1 393.0 L734.8 394.5 L735.6 396.1 L736.3 397.7 L737.0 399.3 L737.6 400.9 L738.3 402.5 L738.9 404.1 L739.5 405.7 L740.1 407.4 L740.6 409.0 L741.1 410.6 L741.6 412.3 L742.1 413.9 L742.5 415.5 L742.9 417.2 L743.3 418.8 L743.7 420.5 L744.0 422.1 L744.3 423.7 L744.6 425.4 L744.8 427.0 L745.1 428.6 L745.2 430.2 L745.4 431.9 L745.6 433.5 L745.7 435.1 L745.8 436.7 L745.8 438.2 L745.9 439.8 L745.9 441.4 L745.9 442.9 L745.8 444.5 L745.8 446.0 L745.7 447.6 L745.6 449.1 L745.4 450.6 L745.3 452.0 L745.1 453.5 L744.8 455.0 L744.6 456.4 L744.3 457.8 L744.0 459.2 L743.7 460.6 L743.4 462.0 L743.0 463.4 L742.6 464.7 L742.2 466.0 L741.8 467.3 L741.3 468.6 L740.8 469.9 L740.3 471.1 L739.8 472.3 L739.2 473.5 L738.7 474.7 L738.1 475.9 L737.5 477.0 L736.8 478.1 L736.2 479.2 L735.5 480.3 L734.8 481.3 L734.1 482.3 L733.4 483.3 L732.7 484.3 L731.9 485.2 L731.1 486.2 L730.3 487.1 L729.5 488.0 L728.7 488.8 L727.9 489.6 L727.0 490.4 L726.1 491.2 L725.3 492.0 L724.4 492.7 L723.4 493.4 L722.5 494.1 L721.6 494.7 L720.6 495.3 L719.7 495.9 L718.7 496.5 L717.7 497.1 L716.7 497.6 L715.7 498.1 L714.7 498.6 L713.7 499.0 L712.6 499.4 L711.6 499.8 L710.5 500.2" stroke="#56a8f2" stroke-width="2.5" fill="none"/><polygon points="683.3,394.3 683.5,379.6 692.6,375.7 692.3,390.1" fill="#ef5877"/><polygon points="665.2,410.3 674.2,405.9 662.9,402.7 653.8,406.9" fill="#a4e23a"/><polygon points="650.5,395.7 638.8,392.4 638.4,377.8 650.3,380.9" fill="#56a8f2"/><path d="M669.0 423.0L592.5 398.6" stroke="#ef5877" stroke-width="2.3"/><polygon points="576.2,393.4 593.2,393.3 594.2,393.4 595.1,393.9 595.8,394.7 596.2,395.8 596.5,397.1 596.4,398.4 596.1,399.8 595.5,401.0 594.8,402.1 593.9,403.0 592.8,403.6 591.8,403.8 590.8,403.7 589.9,403.2" fill="#ef5877"/><path d="M669.0 423.0L669.0 312.3" stroke="#a4e23a" stroke-width="2.3"/><polygon points="662.3,312.4 662.3,312.1 669.0,281.1 675.7,312.1 675.7,312.4 675.2,312.8 674.4,313.0 673.1,313.3 671.6,313.4 669.8,313.5 668.0,313.5 666.3,313.4 664.8,313.3 663.6,313.0 662.7,312.7" fill="#a4e23a"/><path d="M669.0 423.0L726.8 392.7" stroke="#56a8f2" stroke-width="2.3"/><polygon points="722.3,391.6 722.5,390.4 723.0,389.3 723.8,388.5 724.8,387.9 725.9,387.7 738.6,386.5 730.6,396.2 729.8,397.0 728.8,397.6 727.7,397.8 726.6,397.6 725.4,397.2 724.4,396.4 723.5,395.4 722.8,394.2 722.4,392.9" fill="#56a8f2"/><g stroke-width="1.6"><path d="M1111.6 118.9L1112 100M1111.6 118.9L1095 114.5" stroke="#e8677f" stroke-width="1"/><path d="M1111.6 118.9L1112 104" stroke="#9ad62c" stroke-width="2.4"/><path d="M1111.6 118.9L1125 113.5" stroke="#6ba9ee" stroke-width="1"/><path d="M1111.6 118.9L1095 114.5" stroke="#e8677f" stroke-width="1"/></g><circle cx="1112" cy="139.6" r="5.6" fill="#6ea527" stroke="#9ad23a" stroke-width="1"/><circle cx="1099.1" cy="125.5" r="5.8" fill="#1f63c2" stroke="#4c95e6" stroke-width="1"/><circle cx="1128.8" cy="124.7" r="5.8" fill="#c21f3f" stroke="#e8587a" stroke-width="1"/><circle cx="1094.8" cy="114.2" r="6" fill="#e7687f"/><circle cx="1124.9" cy="113.4" r="6" fill="#6eabef"/><circle cx="1112" cy="99.7" r="6.2" fill="#98d62c"/><g font-family="Liberation Sans" font-size="9" text-anchor="middle"><text x="1112" y="103" fill="#16260a">Y</text><text x="1094.8" y="117.5" fill="#6a1422">X</text><text x="1124.9" y="116.7" fill="#10305a">Z</text></g><rect x="197" y="91" width="76" height="20" rx="2.5" fill="#3a3f48" fill-opacity="0.5"/><g fill="#e6e8ea"><circle cx="205.8" cy="96.3" r="1.2"/><circle cx="205.8" cy="101" r="1.2"/><circle cx="205.8" cy="105.7" r="1.2"/></g><rect x="190.75" y="83.75" width="956.5" height="640.5" fill="none" stroke="#a9c6e4" stroke-opacity="0.55" stroke-width="1.5"/></svg>
<div class="t" style="left:215.1px;top:95px;font-size:10.5px;color:#e4e6e8;">Perspective</div>
<div class="a" style="left:189px;top:731px;width:960px;height:29px;background:#30363f;"></div>
<div class="a" style="left:197px;top:745px;width:6px;height:6px;background:#f0625a;border-radius:50%;"></div>
<div class="t" style="left:204.4px;top:741px;font-size:10.5px;color:#cfd1d4;">Output</div>
<div class="t" style="left:250.1px;top:741px;font-size:10.5px;color:#cfd1d4;">Debugger</div>
<div class="t" style="left:310.2px;top:741px;font-size:10.5px;color:#cfd1d4;">Audio</div>
<div class="t" style="left:350.4px;top:741px;font-size:10.5px;color:#cfd1d4;">Animation</div>
<div class="t" style="left:411.3px;top:741px;font-size:10.5px;color:#cfd1d4;">Shader Editor</div>
<svg class="a" style="left:1082.0px;top:742.0px" width="10" height="10" viewBox="0 0 10 10"><path d="M5 0.5L9.5 5L5 9.5L0.5 5z" fill="#4b515b"/></svg>
<div class="t" style="left:1098.4px;top:741px;font-size:10.5px;color:#9a9ea5;">4.0.beta1</div>
<div class="a" style="left:1155px;top:35px;width:202px;height:20px;background:#242930;"></div>
<div class="a" style="left:1155px;top:35px;width:61px;height:20px;background:#363c48;"></div>
<div class="a" style="left:1155px;top:35px;width:61px;height:2px;background:#6b9ad0;"></div>
<div class="t" style="left:1162.2px;top:39px;font-size:10.5px;color:#cfd1d4;">Inspector</div>
<div class="t" style="left:1223.9px;top:39px;font-size:10.5px;color:#72767c;">Node</div>
<svg class="a" style="left:1350.0px;top:39.0px" width="4" height="12" viewBox="0 0 4 12"><g fill="#6f747b"><circle cx="2" cy="1.6" r="1.3"/><circle cx="2" cy="6" r="1.3"/><circle cx="2" cy="10.4" r="1.3"/></g></svg>
<div class="a" style="left:1155px;top:55px;width:202.5px;height:705px;background:#353b47;"></div>
<svg class="a" style="left:1163.5px;top:65.0px" width="11" height="12" viewBox="0 0 11 12"><path d="M1 0.5h5.5L10 4v7.5H1z" fill="#e0e2e4"/><path d="M6.5 0.5V4H10" fill="#9a9ea4"/><circle cx="8.3" cy="9.3" r="2.6" fill="#5fd35f"/></svg>
<svg class="a" style="left:1186.7px;top:65.5px" width="12" height="11" viewBox="0 0 12 11"><path d="M0.5 2h4l1 1.5H10v7H0.5z" fill="#d0d3d6"/><path d="M2 5h9.5l-1.5 5.5H0.5z" fill="#e6e8ea"/></svg>
<svg class="a" style="left:1211.4px;top:65.5px" width="11" height="11" viewBox="0 0 11 11"><path d="M0.5 0.5h8l2 2v8h-10z" fill="#6e737a"/><rect x="2.5" y="0.5" width="5" height="3.5" fill="#353b47"/><rect x="3" y="6.5" width="4.5" height="4" fill="#353b47"/></svg>
<svg class="a" style="left:1238.9px;top:65.0px" width="4" height="12" viewBox="0 0 4 12"><g fill="#e0e2e4"><circle cx="2" cy="1.6" r="1.3"/><circle cx="2" cy="6" r="1.3"/><circle cx="2" cy="10.4" r="1.3"/></g></svg>
<svg class="a" style="left:1302.7px;top:65.5px" width="7" height="11" viewBox="0 0 7 11"><path d="M5.5 1L1.8 5.5L5.5 10" fill="none" stroke="#d9dbde" stroke-width="1.5"/></svg>
<svg class="a" style="left:1320.1px;top:65.5px" width="7" height="11" viewBox="0 0 7 11"><path d="M1.5 1L5.2 5.5L1.5 10" fill="none" stroke="#7d8187" stroke-width="1.5"/></svg>
<svg class="a" style="left:1339.3px;top:65.0px" width="12" height="12" viewBox="0 0 12 12"><path d="M2.2 4.5A4.5 4.5 0 1 1 3 9.2" fill="none" stroke="#e0e2e4" stroke-width="1.6"/><path d="M0 3.5h4.5V7.5z" fill="#e0e2e4"/><path d="M6.5 3.5V6.5h2" fill="none" stroke="#e0e2e4" stroke-width="1.3"/></svg>
<div class="a" style="left:1159px;top:84px;width:171px;height:18px;background:#252a32;border-radius:2px;"></div>
<svg class="a" style="left:1161.1px;top:87.8px" width="11" height="11" viewBox="0 0 11 11"><rect x="0.3" y="0.3" width="10.4" height="10.4" rx="1.2" fill="#c8707e"/><path d="M3.6 2H7.4V4H9V7H7.4V9H3.6V7H2V4H3.6z" fill="#252a32"/></svg>
<div class="t" style="left:1178.8px;top:87px;font-size:10.5px;color:#cfd1d4;">Ground</div>
<svg class="a" style="left:1317.4px;top:90.5px" width="10" height="6" viewBox="0 0 10 6"><path d="M1 1L5.0 4.8L9 1" fill="none" stroke="#d0d3d6" stroke-width="1.5"/></svg>
<svg class="a" style="left:1338.3px;top:86.8px" width="13" height="13" viewBox="0 0 13 13"><circle cx="7.5" cy="3.8" r="2.6" fill="none" stroke="#e0e2e4" stroke-width="1.4"/><path d="M5.7 5.6L4.2 7.2" stroke="#e0e2e4" stroke-width="1.4"/><text x="6.5" y="12.8" font-family="Liberation Sans" font-weight="bold" font-size="5.5" text-anchor="middle" fill="#e0e2e4">DOC</text></svg>
<div class="a" style="left:1159px;top:105.5px;width:171px;height:19.5px;background:#252a32;border-radius:2px;"></div>
<div class="t" style="left:1162.2px;top:108px;font-size:10.5px;color:#b0b3b7;">Filter Properties</div>
<svg class="a" style="left:1314.5px;top:109.5px" width="11" height="11" viewBox="0 0 11 11"><g fill="none" stroke="#d9dbde" stroke-width="1.7"><circle cx="4.3" cy="4.3" r="3"/><path d="M6.5 6.5L10 10" stroke-linecap="round" stroke-width="2"/></g></svg>
<svg class="a" style="left:1339.3px;top:109.0px" width="11" height="12" viewBox="0 0 11 12"><path d="M2.5 0.5V5M2.5 7.5V11.5" stroke="#e0e2e4" stroke-width="1.5"/><rect x="0.8" y="5" width="3.4" height="2.5" fill="#e0e2e4"/><path d="M7.5 4V11.5M5.5 0.5V3.5L7.5 4.8L9.5 3.5V0.5" fill="none" stroke="#e0e2e4" stroke-width="1.5"/></svg>
<div class="a" style="left:1158px;top:128px;width:196.5px;height:627px;background:#21262d;"></div>
<div class="a" style="left:1161px;top:130.4px;width:191px;height:17.400000000000006px;background:#3d434d;border-radius:3px;"></div>
<svg class="a" style="left:1215.7px;top:133.6px" width="11" height="11" viewBox="0 0 11 11"><rect x="0.3" y="0.3" width="10.4" height="10.4" rx="1.2" fill="#d66b7f"/><path d="M3.6 2H7.4V4H9V7H7.4V9H3.6V7H2V4H3.6z" fill="#3d434d"/></svg>
<div class="t" style="left:1230.6px;top:134px;font-size:10px;color:#dcdee0;font-weight:bold;">StaticBody3D</div>
<div class="t" style="left:1167.0px;top:152px;font-size:10.5px;color:#b4b7bb;">Physics Material ...</div>
<div class="t" style="left:1273.3px;top:152px;font-size:10.5px;color:#d8dadc;">&lt;empty&gt;</div>
<svg class="a" style="left:1338.1px;top:156.8px" width="8" height="6" viewBox="0 0 8 6"><path d="M1 1L4.0 4.8L7 1" fill="none" stroke="#c9cbce" stroke-width="1.5"/></svg>
<div class="t" style="left:1167.0px;top:174px;font-size:10.5px;color:#b4b7bb;">Constant Linear Velocity</div>
<div class="a" style="left:1162px;top:193.0px;width:13.299999999999955px;height:19px;background:#1c2026;border-radius:2px;"></div>
<div class="a" style="left:1175.3px;top:193.0px;width:51.40000000000009px;height:19px;background:#1f242a;"></div>
<div class="t" style="left:1165.6px;top:196px;font-size:10.5px;color:#8a8e94;">x</div>
<div class="t" style="left:1178.4px;top:196px;font-size:10.5px;color:#dfe1e3;">0</div>
<div class="t" style="left:1189.1px;top:196px;font-size:10.5px;color:#70747a;">m/s</div>
<div class="a" style="left:1226.7px;top:193.0px;width:12.599999999999909px;height:19px;background:#1c2026;border-radius:2px;"></div>
<div class="a" style="left:1239.3px;top:193.0px;width:51.40000000000009px;height:19px;background:#1f242a;"></div>
<div class="t" style="left:1230.3px;top:196px;font-size:10.5px;color:#8a8e94;">y</div>
<div class="t" style="left:1242.6px;top:196px;font-size:10.5px;color:#dfe1e3;">0</div>
<div class="t" style="left:1253.2px;top:196px;font-size:10.5px;color:#70747a;">m/s</div>
<div class="a" style="left:1290.7px;top:193.0px;width:12.700000000000045px;height:19px;background:#1c2026;border-radius:2px;"></div>
<div class="a" style="left:1303.4px;top:193.0px;width:48.59999999999991px;height:19px;background:#1f242a;"></div>
<div class="t" style="left:1294.3px;top:196px;font-size:10.5px;color:#8a8e94;">z</div>
<div class="t" style="left:1306.6px;top:196px;font-size:10.5px;color:#dfe1e3;">0</div>
<div class="t" style="left:1317.2px;top:196px;font-size:10.5px;color:#70747a;">m/s</div>
<div class="t" style="left:1167.0px;top:217px;font-size:10.5px;color:#b4b7bb;">Constant Angular Velocity</div>
<div class="a" style="left:1162px;top:235.7px;width:13.299999999999955px;height:19px;background:#1c2026;border-radius:2px;"></div>
<div class="a" style="left:1175.3px;top:235.7px;width:51.40000000000009px;height:19px;background:#1f242a;"></div>
<div class="t" style="left:1165.6px;top:239px;font-size:10.5px;color:#8a8e94;">x</div>
<div class="t" style="left:1178.4px;top:239px;font-size:10.5px;color:#dfe1e3;">0</div>
<div class="t" style="left:1189.1px;top:239px;font-size:10.5px;color:#70747a;">°/s</div>
<div class="a" style="left:1226.7px;top:235.7px;width:12.599999999999909px;height:19px;background:#1c2026;border-radius:2px;"></div>
<div class="a" style="left:1239.3px;top:235.7px;width:51.40000000000009px;height:19px;background:#1f242a;"></div>
<div class="t" style="left:1230.3px;top:239px;font-size:10.5px;color:#8a8e94;">y</div>
<div class="t" style="left:1242.6px;top:239px;font-size:10.5px;color:#dfe1e3;">0</div>
<div class="t" style="left:1253.2px;top:239px;font-size:10.5px;color:#70747a;">°/s</div>
<div class="a" style="left:1290.7px;top:235.7px;width:12.700000000000045px;height:19px;background:#1c2026;border-radius:2px;"></div>
<div class="a" style="left:1303.4px;top:235.7px;width:48.59999999999991px;height:19px;background:#1f242a;"></div>
<div class="t" style="left:1294.3px;top:239px;font-size:10.5px;color:#8a8e94;">z</div>
<div class="t" style="left:1306.6px;top:239px;font-size:10.5px;color:#dfe1e3;">0</div>
<div class="t" style="left:1317.2px;top:239px;font-size:10.5px;color:#70747a;">°/s</div>
<div class="a" style="left:1161px;top:255px;width:191px;height:17.100000000000023px;background:#3d434d;border-radius:3px;"></div>
<svg class="a" style="left:1211.4px;top:258.1px" width="11" height="11" viewBox="0 0 11 11"><path d="M5.5 0.5L10.3 3V8.2L5.5 10.5L0.7 8.2V3z" fill="#e0e2e4"/><path d="M5.5 5.5L1.5 3.3M5.5 5.5L9.5 3.3M5.5 5.5V10" stroke="#2a2f38" stroke-width="1"/></svg>
<div class="t" style="left:1227.1px;top:258px;font-size:10px;color:#dcdee0;font-weight:bold;">PhysicsBody3D</div>
<div class="a" style="left:1161px;top:272.1px;width:191px;height:16.399999999999977px;background:#262b33;"></div>
<svg class="a" style="left:1164.1px;top:276.3px" width="5" height="8" viewBox="0 0 5 8"><path d="M1 1L4 4L1 7" fill="none" stroke="#8d9197" stroke-width="1.2"/></svg>
<div class="t" style="left:1171.7px;top:275px;font-size:10px;color:#dcdee0;font-weight:bold;">Axis Lock</div>
<div class="a" style="left:1161px;top:289.2px;width:191px;height:16.5px;background:#3d434d;border-radius:3px;"></div>
<svg class="a" style="left:1204.3px;top:291.9px" width="11" height="11" viewBox="0 0 11 11"><path d="M5.5 0.5L10.3 3V8.2L5.5 10.5L0.7 8.2V3z" fill="#e0e2e4"/><path d="M5.5 5.5L1.5 3.3M5.5 5.5L9.5 3.3M5.5 5.5V10" stroke="#2a2f38" stroke-width="1"/></svg>
<div class="t" style="left:1220.0px;top:292px;font-size:10px;color:#dcdee0;font-weight:bold;">CollisionObject3D</div>
<div class="t" style="left:1167.0px;top:310px;font-size:10.5px;color:#b4b7bb;">Disable Mode</div>
<div class="a" style="left:1257.5px;top:307.7px;width:94.5px;height:17.4px;background:#1f242a;"></div>
<div class="t" style="left:1261.1px;top:310px;font-size:10.5px;color:#d8dadc;">Remove</div>
<svg class="a" style="left:1340.2px;top:313.6px" width="8" height="6" viewBox="0 0 8 6"><path d="M1 1L4.0 4.8L7 1" fill="none" stroke="#c9cbce" stroke-width="1.5"/></svg>
<div class="a" style="left:1161px;top:327px;width:191px;height:17px;background:#262b33;"></div>
<svg class="a" style="left:1164.1px;top:331.5px" width="5" height="8" viewBox="0 0 5 8"><path d="M1 1L4 4L1 7" fill="none" stroke="#8d9197" stroke-width="1.2"/></svg>
<div class="t" style="left:1171.6px;top:330px;font-size:10px;color:#dcdee0;font-weight:bold;">Collision</div>
<div class="a" style="left:1161px;top:344px;width:191px;height:17px;background:#262b33;"></div>
<svg class="a" style="left:1164.1px;top:348.5px" width="5" height="8" viewBox="0 0 5 8"><path d="M1 1L4 4L1 7" fill="none" stroke="#8d9197" stroke-width="1.2"/></svg>
<div class="t" style="left:1171.6px;top:347px;font-size:10px;color:#dcdee0;font-weight:bold;">Input</div>
<div class="a" style="left:1161px;top:361.3px;width:191px;height:16.599999999999966px;background:#3d434d;border-radius:3px;"></div>
<svg class="a" style="left:1228.6px;top:364.4px" width="10.4" height="10.4" viewBox="0 0 10.4 10.4"><circle cx="5.2" cy="5.2" r="3.9" fill="none" stroke="#e66f86" stroke-width="1.6"/></svg>
<div class="t" style="left:1244.2px;top:364px;font-size:10px;color:#dcdee0;font-weight:bold;">Node3D</div>
<div class="a" style="left:1161px;top:378px;width:191px;height:16px;background:#262b33;"></div>
<svg class="a" style="left:1163.9px;top:383.5px" width="7" height="6" viewBox="0 0 7 6"><path d="M1 1L3.5 4.8L6 1" fill="none" stroke="#8d9197" stroke-width="1.5"/></svg>
<div class="t" style="left:1172.1px;top:381px;font-size:10px;color:#dcdee0;font-weight:bold;">Transform</div>
<div class="a" style="left:1162px;top:394px;width:190px;height:199px;background:#20252b;"></div>
<div class="t" style="left:1176.2px;top:397px;font-size:10.5px;color:#b4b7bb;">Position</div>
<svg class="a" style="left:1341.4px;top:398.2px" width="11" height="11" viewBox="0 0 11 11"><path d="M3 2.5A4 4 0 1 1 2 7.5" fill="none" stroke="#e0e2e4" stroke-width="1.6"/><path d="M0.5 0.8V5H4.7z" fill="#e0e2e4"/></svg>
<div class="a" style="left:1170.6px;top:416.2px;width:12.900000000000091px;height:19px;background:#1c2026;border-radius:2px;"></div>
<div class="a" style="left:1183.5px;top:416.2px;width:47.90000000000009px;height:19px;background:#1f242a;"></div>
<div class="t" style="left:1174.2px;top:419px;font-size:10.5px;color:#8f7277;">x</div>
<div class="t" style="left:1187.6px;top:419px;font-size:10.5px;color:#dfe1e3;">0</div>
<div class="t" style="left:1197.8px;top:419px;font-size:10.5px;color:#70747a;">m</div>
<div class="a" style="left:1231.4px;top:416.2px;width:14.299999999999955px;height:19px;background:#1c2026;border-radius:2px;"></div>
<div class="a" style="left:1245.7px;top:416.2px;width:47.399999999999864px;height:19px;background:#1f242a;"></div>
<div class="t" style="left:1235.0px;top:419px;font-size:10.5px;color:#7f8f74;">y</div>
<div class="t" style="left:1248.4px;top:419px;font-size:10.5px;color:#dfe1e3;">-1</div>
<div class="t" style="left:1262.2px;top:419px;font-size:10.5px;color:#70747a;">m</div>
<div class="a" style="left:1293.1px;top:416.2px;width:14.200000000000045px;height:19px;background:#1c2026;border-radius:2px;"></div>
<div class="a" style="left:1307.3px;top:416.2px;width:44.700000000000045px;height:19px;background:#1f242a;"></div>
<div class="t" style="left:1296.7px;top:419px;font-size:10.5px;color:#74808f;">z</div>
<div class="t" style="left:1309.3px;top:419px;font-size:10.5px;color:#dfe1e3;">0</div>
<div class="t" style="left:1320.1px;top:419px;font-size:10.5px;color:#70747a;">m</div>
<div class="t" style="left:1176.2px;top:440px;font-size:10.5px;color:#b4b7bb;">Rotation</div>
<div class="a" style="left:1170.6px;top:458.5px;width:12.900000000000091px;height:19px;background:#1c2026;border-radius:2px;"></div>
<div class="a" style="left:1183.5px;top:458.5px;width:47.90000000000009px;height:19px;background:#1f242a;"></div>
<div class="t" style="left:1174.2px;top:462px;font-size:10.5px;color:#8f7277;">x</div>
<div class="t" style="left:1187.6px;top:462px;font-size:10.5px;color:#dfe1e3;">0</div>
<div class="t" style="left:1195.5px;top:462px;font-size:10.5px;color:#70747a;">°</div>
<div class="a" style="left:1231.4px;top:458.5px;width:14.299999999999955px;height:19px;background:#1c2026;border-radius:2px;"></div>
<div class="a" style="left:1245.7px;top:458.5px;width:47.399999999999864px;height:19px;background:#1f242a;"></div>
<div class="t" style="left:1235.0px;top:462px;font-size:10.5px;color:#7f8f74;">y</div>
<div class="t" style="left:1248.9px;top:462px;font-size:10.5px;color:#dfe1e3;">0</div>
<div class="t" style="left:1257.1px;top:462px;font-size:10.5px;color:#70747a;">°</div>
<div class="a" style="left:1293.1px;top:458.5px;width:14.200000000000045px;height:19px;background:#1c2026;border-radius:2px;"></div>
<div class="a" style="left:1307.3px;top:458.5px;width:44.700000000000045px;height:19px;background:#1f242a;"></div>
<div class="t" style="left:1296.7px;top:462px;font-size:10.5px;color:#74808f;">z</div>
<div class="t" style="left:1309.3px;top:462px;font-size:10.5px;color:#dfe1e3;">0</div>
<div class="t" style="left:1317.6px;top:462px;font-size:10.5px;color:#70747a;">°</div>
<div class="a" style="left:1173.7px;top:475px;width:46.700000000000045px;height:1px;background:#3a3f47;"></div>
<div class="a" style="left:1173.7px;top:475px;width:24.5px;height:1px;background:#c0c3c7;"></div>
<div class="a" style="left:1196.7px;top:473.5px;width:3px;height:3px;background:#e0e2e4;"></div>
<div class="a" style="left:1234.6px;top:475px;width:46.600000000000136px;height:1px;background:#3a3f47;"></div>
<div class="a" style="left:1234.6px;top:475px;width:24.5px;height:1px;background:#c0c3c7;"></div>
<div class="a" style="left:1257.6px;top:473.5px;width:3px;height:3px;background:#e0e2e4;"></div>
<div class="a" style="left:1297px;top:475px;width:46.700000000000045px;height:1px;background:#3a3f47;"></div>
<div class="a" style="left:1297px;top:475px;width:24.25px;height:1px;background:#c0c3c7;"></div>
<div class="a" style="left:1319.75px;top:473.5px;width:3px;height:3px;background:#e0e2e4;"></div>
<div class="t" style="left:1176.2px;top:483px;font-size:10.5px;color:#b4b7bb;">Scale</div>
<div class="a" style="left:1170.6px;top:501.6px;width:14.5px;height:19px;background:#1c2026;border-radius:2px;"></div>
<div class="a" style="left:1185.1px;top:501.6px;width:41.600000000000136px;height:19px;background:#1f242a;"></div>
<div class="t" style="left:1174.2px;top:505px;font-size:10.5px;color:#8f7277;">x</div>
<div class="t" style="left:1188.3px;top:505px;font-size:10.5px;color:#dfe1e3;">1</div>
<div class="a" style="left:1226.7px;top:501.6px;width:14.200000000000045px;height:19px;background:#1c2026;border-radius:2px;"></div>
<div class="a" style="left:1240.9px;top:501.6px;width:41.899999999999864px;height:19px;background:#1f242a;"></div>
<div class="t" style="left:1230.3px;top:505px;font-size:10.5px;color:#7f8f74;">y</div>
<div class="t" style="left:1244.5px;top:505px;font-size:10.5px;color:#dfe1e3;">1</div>
<div class="a" style="left:1282.8px;top:501.6px;width:15.0px;height:19px;background:#1c2026;border-radius:2px;"></div>
<div class="a" style="left:1297.8px;top:501.6px;width:40.200000000000045px;height:19px;background:#1f242a;"></div>
<div class="t" style="left:1286.4px;top:505px;font-size:10.5px;color:#74808f;">z</div>
<div class="t" style="left:1300.6px;top:505px;font-size:10.5px;color:#dfe1e3;">1</div>
<svg class="a" style="left:1339.8px;top:504.7px" width="12" height="12" viewBox="0 0 12 12"><g fill="none" stroke="#e0e2e4" stroke-width="1.5" stroke-linecap="round"><path d="M5.5 3.5l1.5-1.5a2.1 2.1 0 0 1 3 3L8.5 6.5"/><path d="M6.5 8.5L5 10a2.1 2.1 0 0 1-3-3L3.5 5.5"/><path d="M4.5 7.5l3-3"/></g></svg>
<div class="t" style="left:1176.2px;top:528px;font-size:10.5px;color:#b4b7bb;">Rotation Edit M...</div>
<div class="t" style="left:1265.0px;top:528px;font-size:10.5px;color:#d8dadc;">Euler</div>
<svg class="a" style="left:1340.5px;top:531.5px" width="8" height="6" viewBox="0 0 8 6"><path d="M1 1L4.0 4.8L7 1" fill="none" stroke="#c9cbce" stroke-width="1.5"/></svg>
<div class="t" style="left:1176.2px;top:552px;font-size:10.5px;color:#b4b7bb;">Rotation Order</div>
<div class="t" style="left:1265.0px;top:552px;font-size:10.5px;color:#d8dadc;">YXZ</div>
<svg class="a" style="left:1340.5px;top:556.0px" width="8" height="6" viewBox="0 0 8 6"><path d="M1 1L4.0 4.8L7 1" fill="none" stroke="#c9cbce" stroke-width="1.5"/></svg>
<div class="t" style="left:1176.2px;top:576px;font-size:10.5px;color:#b4b7bb;">Top Level</div>
<div class="a" style="left:1265px;top:577.3px;width:10px;height:10px;background:#4a505a;border-radius:2px;"></div>
<div class="t" style="left:1281.6px;top:576px;font-size:10.5px;color:#d8dadc;">On</div>
<div class="a" style="left:1161px;top:593px;width:191px;height:16px;background:#262b33;"></div>
<svg class="a" style="left:1164.1px;top:597.0px" width="5" height="8" viewBox="0 0 5 8"><path d="M1 1L4 4L1 7" fill="none" stroke="#8d9197" stroke-width="1.2"/></svg>
<div class="t" style="left:1172.1px;top:595px;font-size:10px;color:#dcdee0;font-weight:bold;">Visibility</div>
<div class="a" style="left:1161px;top:609.3px;width:191px;height:16.600000000000023px;background:#3d434d;border-radius:3px;"></div>
<svg class="a" style="left:1235.7px;top:612.4px" width="10.4" height="10.4" viewBox="0 0 10.4 10.4"><circle cx="5.2" cy="5.2" r="3.9" fill="none" stroke="#e6e8ea" stroke-width="1.6"/></svg>
<div class="t" style="left:1251.1px;top:612px;font-size:10px;color:#dcdee0;font-weight:bold;">Node</div>
<div class="a" style="left:1161px;top:626px;width:191px;height:17px;background:#262b33;"></div>
<svg class="a" style="left:1164.1px;top:630.5px" width="5" height="8" viewBox="0 0 5 8"><path d="M1 1L4 4L1 7" fill="none" stroke="#8d9197" stroke-width="1.2"/></svg>
<div class="t" style="left:1172.1px;top:629px;font-size:10px;color:#dcdee0;font-weight:bold;">Process</div>
<div class="a" style="left:1161px;top:643px;width:191px;height:17px;background:#262b33;"></div>
<svg class="a" style="left:1164.1px;top:647.5px" width="5" height="8" viewBox="0 0 5 8"><path d="M1 1L4 4L1 7" fill="none" stroke="#8d9197" stroke-width="1.2"/></svg>
<div class="t" style="left:1172.1px;top:646px;font-size:10px;color:#dcdee0;font-weight:bold;">Editor Description</div>
<div class="t" style="left:1166.7px;top:664px;font-size:10.5px;color:#b4b7bb;">Script</div>
<div class="t" style="left:1273.3px;top:664px;font-size:10.5px;color:#d8dadc;">&lt;empty&gt;</div>
<svg class="a" style="left:1338.1px;top:668.8px" width="8" height="6" viewBox="0 0 8 6"><path d="M1 1L4.0 4.8L7 1" fill="none" stroke="#c9cbce" stroke-width="1.5"/></svg>
<div class="a" style="left:1190.3px;top:684.5px;width:130.5px;height:20.5px;background:#2c313a;border-radius:3px;"></div>
<svg class="a" style="left:1195.4px;top:689.3px" width="11" height="11" viewBox="0 0 11 11"><path d="M5.5 0.5V10.5M0.5 5.5H10.5" stroke="#e0e2e4" stroke-width="1.8"/></svg>
<div class="t" style="left:1230.2px;top:688px;font-size:10.5px;color:#cfd1d4;">Add Metadata</div>
<svg class="a" style="left:1262px;top:434px" width="14" height="20" viewBox="0 0 14 20"><path d="M1 1V16L4.5 12.5L7.5 19L10 18L7 11.5H12z" fill="#111" stroke="#f4f4f4" stroke-width="1.2"/></svg>
</body></html>
